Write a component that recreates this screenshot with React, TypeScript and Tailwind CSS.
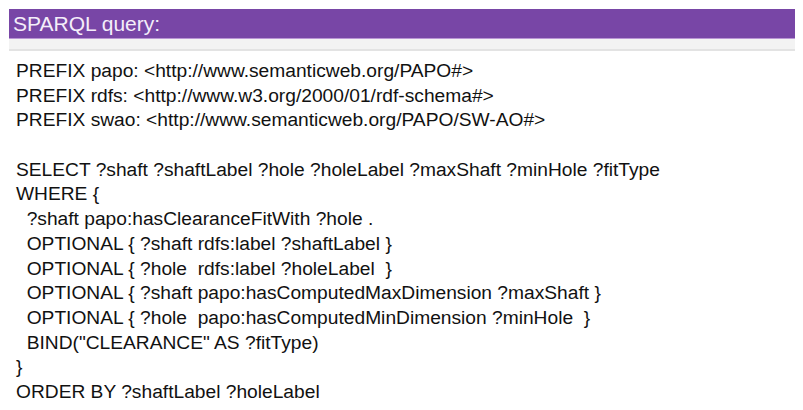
import React from "react";

const lines = [
  "PREFIX papo: <http://www.semanticweb.org/PAPO#>",
  "PREFIX rdfs: <http://www.w3.org/2000/01/rdf-schema#>",
  "PREFIX swao: <http://www.semanticweb.org/PAPO/SW-AO#>",
  "",
  "SELECT ?shaft ?shaftLabel ?hole ?holeLabel ?maxShaft ?minHole ?fitType",
  "WHERE {",
  "  ?shaft papo:hasClearanceFitWith ?hole .",
  "  OPTIONAL { ?shaft rdfs:label ?shaftLabel }",
  "  OPTIONAL { ?hole  rdfs:label ?holeLabel  }",
  "  OPTIONAL { ?shaft papo:hasComputedMaxDimension ?maxShaft }",
  "  OPTIONAL { ?hole  papo:hasComputedMinDimension ?minHole  }",
  "  BIND(\"CLEARANCE\" AS ?fitType)",
  "}",
  "ORDER BY ?shaftLabel ?holeLabel",
];

export default function App() {
  return (
    <div className="w-[803px] h-[410px] bg-white pt-[9px] overflow-hidden" style={{ fontFamily: '"Liberation Sans", Arial, sans-serif' }}>
      <div className="mx-[9px] w-[786px]">
        <div className="h-[29px] bg-[#7846a6] pl-[4px] text-[21px] leading-[29px] text-[#f4eefa]">SPARQL query:</div>
        <div className="h-[1px] bg-[#b996d4]" />
        <div className="h-[10px] bg-[#f3f3f3]" />
        <div className="h-[2px] bg-[#e3e3e3]" />
      </div>
      <div className="pl-[16px] pt-[8px] text-[19.2px] leading-[24.7px] text-[#111111] whitespace-pre">
        {lines.map((l, i) => (
          <div key={i} className="h-[24.7px]">{l}</div>
        ))}
      </div>
    </div>
  );
}
